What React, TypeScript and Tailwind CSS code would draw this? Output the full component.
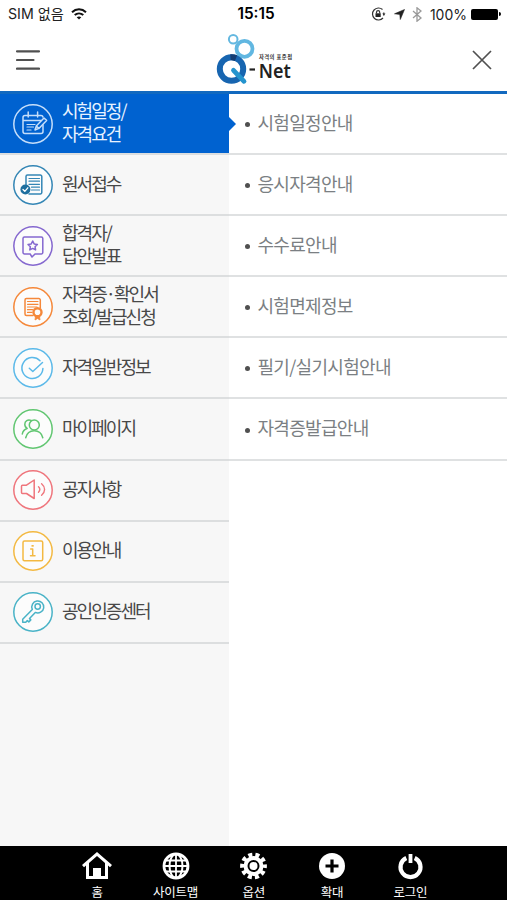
import { useState } from 'react';
import type { ReactNode } from 'react';

type MenuItem = {
    lines: string[];
    color: string;
    icon: ReactNode;
};

const menuItems: MenuItem[] = [
    {
        lines: ['시험일정/', '자격요건'],
        color: 'text-[#c5defa]',
        icon: (
            <>
                <path d="M30 21v6.5a2 2 0 0 1-2 2H12a2 2 0 0 1-2-2v-14a2 2 0 0 1 2-2h16a2 2 0 0 1 2 1.5M10 16.5h18M15.2 8v5M24.6 8v5" />
                <path d="M14 20.5h8M14 23h6.5M14 26h4" strokeWidth="1.2" />
                <path d="m22 26 1.3-4L31 14l2.6 2.4-7.7 8zM23.3 22l2.6 2.4" />
            </>
        ),
    },
    {
        lines: ['원서접수'],
        color: 'text-[#3486b5]',
        icon: (
            <>
                <path d="M13 19.5v-8a1.5 1.5 0 0 1 1.5-1.5h12.8a1.5 1.5 0 0 1 1.5 1.5v16a1.5 1.5 0 0 1-1.5 1.5H16" />
                <path d="M16 13.5h10.5M16 16.2h10.5M16 19.3h10.5M18.5 22.2h8M18.5 25h8" strokeWidth="1.2" />
                <circle cx="12.4" cy="24.5" r="5" fill="#1d6f9f" stroke="none" />
                <path d="m10 24.5 1.8 1.8 3-3.5" stroke="#fff" strokeWidth="1.3" />
            </>
        ),
    },
    {
        lines: ['합격자/', '답안발표'],
        color: 'text-[#8568cf]',
        icon: (
            <>
                <path d="M11.5 11h16.8a1.5 1.5 0 0 1 1.5 1.5v14a1.5 1.5 0 0 1-1.5 1.5H22l-3 3-1.8-3h-5.7a1.5 1.5 0 0 1-1.5-1.5v-14a1.5 1.5 0 0 1 1.5-1.5z" />
                <path d="m19.7 15 1.45 2.95 3.25.45-2.35 2.3.55 3.25-2.9-1.55-2.9 1.55.55-3.25-2.35-2.3 3.25-.45z" />
            </>
        ),
    },
    {
        lines: ['자격증·확인서', '조회/발급신청'],
        color: 'text-[#f5883a]',
        icon: (
            <>
                <path d="M20 28.5h-6.5a1.5 1.5 0 0 1-1.5-1.5V13a1.5 1.5 0 0 1 1.5-1.5h12.3a1.5 1.5 0 0 1 1.5 1.5v8" />
                <path d="M14.5 14.5H25M14.5 17.3H25M14.5 20H24M14.5 22.7h5M14.5 25.4h4.5" strokeWidth="1.2" />
                <circle cx="24.5" cy="25.2" r="4" strokeWidth="2.4" />
                <path d="m22.5 29-.5 4 2.5-1.5L27 33l-.5-4z" fill="currentColor" strokeWidth=".8" />
            </>
        ),
    },
    {
        lines: ['자격일반정보'],
        color: 'text-[#5bb9e9]',
        icon: (
            <>
                <path d="M27 12.8a10.5 10.5 0 1 0 2.9 7.7" />
                <path d="m16.3 20.3 3.5 3.2 9.7-9" />
            </>
        ),
    },
    {
        lines: ['마이페이지'],
        color: 'text-[#61c671]',
        icon: (
            <>
                <circle cx="21.3" cy="16" r="5" />
                <path d="M12.7 28.7c1-4 4-7 8.5-7s7.6 3 8.6 7" />
                <path d="M18.3 11.5c-3.5-1.4-6.5.5-6.5 3.8 0 2 1 3.5 2.4 4.2M9.3 25c.4-2.6 2-4.5 4.8-5.5" />
            </>
        ),
    },
    {
        lines: ['공지사항'],
        color: 'text-[#ef757c]',
        icon: (
            <>
                <path d="M9.5 15.2h4l7.7-5.2v18.5l-7.7-5h-4a1 1 0 0 1-1-1v-6.3a1 1 0 0 1 1-1z" />
                <path d="M25.5 16.8c1.6 1.6 1.6 3.8 0 5.4M28.6 13.8c4 3.4 4 8 0 11.4" strokeWidth="1.4" />
            </>
        ),
    },
    {
        lines: ['이용안내'],
        color: 'text-[#f3b942]',
        icon: (
            <>
                <rect x="10" y="10" width="19.7" height="19.7" rx="1.5" />
                <path d="M19.6 14v1.7" strokeWidth="2.2" strokeLinecap="butt" />
                <path d="M17.7 18h2v6.5M17.5 24.7h4.5" strokeWidth="1.5" />
            </>
        ),
    },
    {
        lines: ['공인인증센터'],
        color: 'text-[#49b3c7]',
        icon: (
            <>
                <circle cx="24.7" cy="14.5" r="2.7" />
                <path d="M19.3 17.4a6 6 0 1 1 3 3l-5.8 6.2 1.3 1.3-2 2-1.5-1.3-1.5 1.6H9.7v-3z" />
            </>
        ),
    },
];

const subItems = [
    '시험일정안내',
    '응시자격안내',
    '수수료안내',
    '시험면제정보',
    '필기/실기시험안내',
    '자격증발급안내',
];

const bottomItems = [
    {
        label: '홈',
        icon: (
            <path d="M15 1 0 14l2 2.2 2-1.7V28h22V14.5l2 1.7 2-2.2zM15 5l8 7v13h-4v-8h-8v8H7V12z" fill="currentColor" fillRule="evenodd" />
        ),
    },
    {
        label: '사이트맵',
        icon: (
            <g fill="none" stroke="currentColor" strokeWidth="2">
                <circle cx="16" cy="15" r="12" strokeWidth="2.8" />
                <ellipse cx="16" cy="15" rx="6.5" ry="12" />
                <path d="M16 3v24M4 15h24M6 9.5h20M6 20.5h20" strokeWidth="1.8" />
            </g>
        ),
    },
    {
        label: '옵션',
        icon: (
            <g fill="none" stroke="currentColor">
                <circle cx="14.5" cy="15" r="11" strokeWidth="4.8" strokeDasharray="3.9 3.012" strokeDashoffset="1.95" />
                <circle cx="14.5" cy="15" r="8" strokeWidth="4" />
                <circle cx="14.5" cy="15" r="4" fill="currentColor" stroke="none" />
            </g>
        ),
    },
    {
        label: '확대',
        icon: (
            <>
                <circle cx="15" cy="15" r="13" fill="currentColor" />
                <path d="M15 8.5v13M8.5 15h13" stroke="#000" strokeWidth="3.2" />
            </>
        ),
    },
    {
        label: '로그인',
        icon: (
            <g fill="none" stroke="currentColor" strokeWidth="4.2">
                <path d="M11.3 7a10 10 0 1 0 8.4 0" />
                <path d="M15.5 3v9" strokeWidth="3.8" />
            </g>
        ),
    },
];

const StatusBar = () => (
    <div className="grid h-7 grid-cols-[1fr_auto_1fr] items-center pl-2 pr-[6px] font-['Inter','Noto_Sans_CJK_KR',sans-serif] text-[#222]">
        <div className="flex items-center gap-[7px]">
            <span className="whitespace-nowrap text-[14.2px]">SIM 없음</span>
            <svg className="h-[12px] w-[16px]" viewBox="0 0 16 12" fill="none" stroke="#111" strokeWidth="2">
                <path d="M1 4.2c4-3.8 10-3.8 14 0M3.7 7.1c2.5-2.3 6.1-2.3 8.6 0" />
                <path d="M8 11.5 5.7 9.2c1.3-1.1 3.3-1.1 4.6 0z" fill="#111" stroke="none" />
            </svg>
        </div>
        <span className="pl-[3px] text-[15.3px] font-semibold text-black">15:15</span>
        <div className="flex items-center justify-end">
            <svg className="mr-[8px] h-[14px] w-[15px]" viewBox="0 0 15 14" fill="none" stroke="#333" strokeWidth="1.2">
                <path d="M11.5 2.5a6 6 0 1 0 .5 8.5M12.8 5.5v3" />
                <path d="m11.3 6.5 1.5 2 1.7-2z" fill="#333" stroke="none" />
                <rect x="4.5" y="6.3" width="5.2" height="3.7" fill="#222" stroke="none" />
                <path d="M5.5 6.5V5.2a1.6 1.6 0 0 1 3.2 0v1.3" />
            </svg>
            <svg className="mr-[7px] h-[11px] w-[11px]" viewBox="0 0 11 11">
                <path d="M10.5.5 6.3 10.5l-.5-5.1L.5 4.8z" fill="#222" stroke="#222" strokeWidth=".6" />
            </svg>
            <svg className="mr-[8px] h-[15px] w-[10px]" viewBox="0 0 10 15" fill="none" stroke="#999" strokeWidth="1.3">
                <path d="m1 4 8 7-4 3.2V.8L9 4l-8 7" />
            </svg>
            <span className="mr-[4px] text-[14px]">100%</span>
            <span className="h-[11px] w-[27px] rounded-[2px] bg-black" />
            <span className="ml-[1px] h-1 w-[2px] rounded-r bg-black" />
        </div>
    </div>
);

const Logo = () => (
    <svg className="mb-[2px] mr-[1px] h-[56px] w-[80px]" viewBox="0 0 80 56" fill="none">
        <circle cx="18.2" cy="8.2" r="4.3" stroke="#64b8e0" strokeWidth="2" />
        <circle cx="29.5" cy="17.8" r="8" stroke="#61b7e1" strokeWidth="3.8" />
        <circle cx="16.5" cy="38" r="11.7" stroke="#1765b0" strokeWidth="6" />
        <path d="M15.5 26.3a11.7 11.7 0 0 1 5.5.8" stroke="#143d72" strokeWidth="6" />
        <path d="m18.5 39.3 10.5 11" stroke="#2494ce" strokeWidth="4.8" strokeLinecap="round" />
        <path d="M34.5 38.5h5.5" stroke="#222" strokeWidth="2.2" />
        <text x="43.7" y="46.5" className="fill-[#222] font-['Noto_Sans',sans-serif] text-[19px] font-semibold" textLength="32" lengthAdjust="spacingAndGlyphs">Net</text>
        <text x="44" y="28.2" className="fill-[#333] font-['Noto_Sans_CJK_KR',sans-serif] text-[5.3px] font-bold" textLength="33">자격의 표준점</text>
    </svg>
);

const App = () => {
    const [active, setActive] = useState(0);

    return (
        <div className="flex h-[900px] w-[507px] flex-col overflow-hidden bg-white font-['Noto_Sans_CJK_KR',sans-serif]">
            <StatusBar />

            <header className="flex h-[66px] shrink-0 items-center justify-between border-b-[3px] border-[#1269bf] pl-4 pr-[14px]">
                <button aria-label="메뉴">
                    <svg className="h-[24px] w-[24px]" viewBox="0 0 24 24" stroke="#505050" strokeWidth="2.2" strokeLinecap="round">
                        <path d="M1 3.3h22M1 12h16.5M1 20.6h22" />
                    </svg>
                </button>
                <Logo />
                <button aria-label="닫기">
                    <svg className="h-[22px] w-[22px]" viewBox="0 0 22 22" stroke="#505050" strokeWidth="1.7">
                        <path d="m2 2 18 18M20 2 2 20" />
                    </svg>
                </button>
            </header>

            <main className="flex min-h-0 flex-1">
                {/* Main categories */}
                <nav className="w-[228.5px] shrink-0 bg-[#f7f7f7]">
                    {menuItems.map((item, index) => (
                        <button
                            key={item.lines[0]}
                            onClick={() => setActive(index)}
                            className={`relative flex h-[61.1px] w-full items-center border-b-2 border-[#dcdedf] pl-[12.5px] text-left ${active === index
                                ? 'bg-[#0062d0] bg-clip-padding text-[#e8f2ff]'
                                : 'text-[#484848]'
                                }`}
                        >
                            <svg
                                className={`mr-[9.5px] h-[40px] w-[40px] shrink-0 ${item.color}`}
                                viewBox="0 0 40 40"
                                fill="none"
                                stroke="currentColor"
                                strokeWidth="1.5"
                                strokeLinecap="round"
                                strokeLinejoin="round"
                            >
                                <circle cx="20" cy="20" r="19.2" fill={active === index ? 'none' : '#fcfcfc'} />
                                {item.icon}
                            </svg>
                            <span className="pb-[3px] text-[18px] leading-[23px] tracking-[-1.95px]">
                                {item.lines.map((line) => (
                                    <span key={line} className="block whitespace-nowrap">{line}</span>
                                ))}
                            </span>
                            {active === index && (
                                <svg className="absolute left-[228px] top-[22px] h-4 w-2" viewBox="0 0 8 16">
                                    <path d="M0 0v16l8-8z" fill="#0062d0" />
                                </svg>
                            )}
                        </button>
                    ))}
                </nav>

                {/* Sub menu */}
                <ul className="flex-1">
                    {subItems.map((label) => (
                        <li key={label} className="flex h-[61.1px] items-center border-b-2 border-[#dfe1e2] pl-[16px]">
                            <span className="mr-[8px] mt-[2px] h-[5px] w-[5px] rounded-full bg-[#505050]" />
                            <span className="pb-[3px] text-[18px] tracking-[-0.7px] text-[#7b7f83]">{label}</span>
                        </li>
                    ))}
                </ul>
            </main>

            <footer className="flex h-[54px] shrink-0 bg-black pl-[58px] text-white">
                {bottomItems.map((item) => (
                    <button key={item.label} className="flex w-[78.3px] flex-col items-center justify-start pt-[5px]">
                        <svg className="h-[30px] w-[30px] shrink-0" viewBox="0 0 30 30">{item.icon}</svg>
                        <span className="mt-[2px] whitespace-nowrap text-[12.5px] leading-[17px] tracking-[-0.3px]">{item.label}</span>
                    </button>
                ))}
            </footer>
        </div>
    );
};

export default App;
